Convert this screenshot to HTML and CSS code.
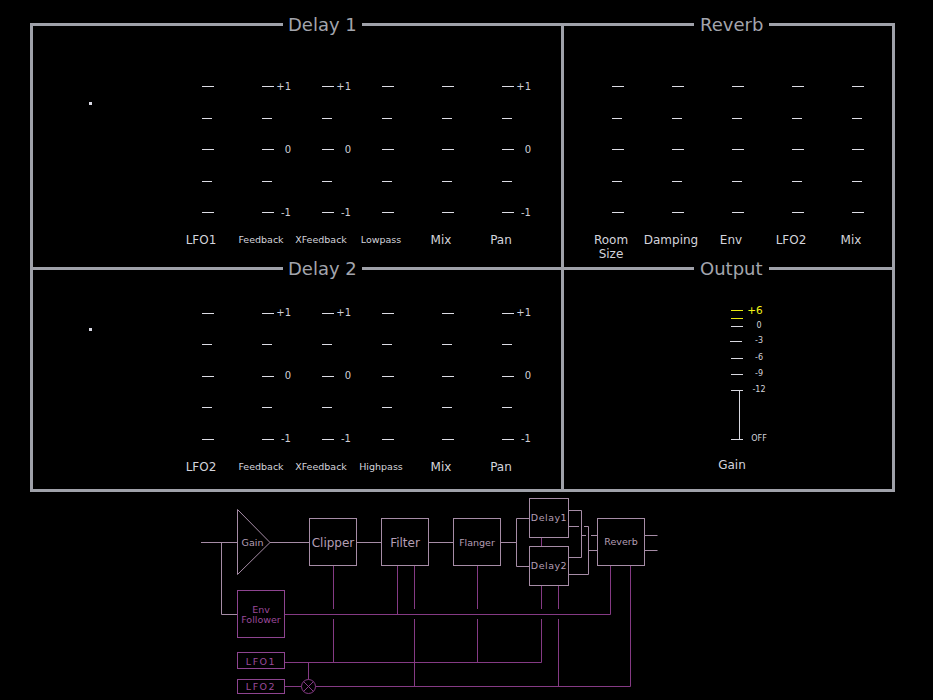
FILE: index.html
```html
<!DOCTYPE html>
<html lang="en">
<head>
    <meta charset="UTF-8">
    <title>Delay / Reverb</title>
    <link rel="stylesheet" href="styles.css">
</head>
<body>
    <div class="rack">
        <!-- Delay 1 -->
        <section class="panel delay top">
            <h2 class="title t-delay">Delay 1</h2>
            <div class="led-area"><span class="led"></span></div>
            <div class="sliders">
                <div class="slider">
                    <div class="scale">
                        <div class="mark"><i class="tick"></i></div>
                        <div class="mark"><i class="tick short"></i></div>
                        <div class="mark"><i class="tick"></i></div>
                        <div class="mark"><i class="tick short"></i></div>
                        <div class="mark"><i class="tick"></i></div>
                    </div>
                    <div class="label">LFO1</div>
                </div>
                <div class="slider">
                    <div class="scale">
                        <div class="mark"><i class="tick"></i><span class="val">+1</span></div>
                        <div class="mark"><i class="tick short"></i></div>
                        <div class="mark"><i class="tick"></i><span class="val">0</span></div>
                        <div class="mark"><i class="tick short"></i></div>
                        <div class="mark"><i class="tick"></i><span class="val">-1</span></div>
                    </div>
                    <div class="label small">Feedback</div>
                </div>
                <div class="slider">
                    <div class="scale">
                        <div class="mark"><i class="tick"></i><span class="val">+1</span></div>
                        <div class="mark"><i class="tick short"></i></div>
                        <div class="mark"><i class="tick"></i><span class="val">0</span></div>
                        <div class="mark"><i class="tick short"></i></div>
                        <div class="mark"><i class="tick"></i><span class="val">-1</span></div>
                    </div>
                    <div class="label small">XFeedback</div>
                </div>
                <div class="slider">
                    <div class="scale">
                        <div class="mark"><i class="tick"></i></div>
                        <div class="mark"><i class="tick short"></i></div>
                        <div class="mark"><i class="tick"></i></div>
                        <div class="mark"><i class="tick short"></i></div>
                        <div class="mark"><i class="tick"></i></div>
                    </div>
                    <div class="label small">Lowpass</div>
                </div>
                <div class="slider">
                    <div class="scale">
                        <div class="mark"><i class="tick"></i></div>
                        <div class="mark"><i class="tick short"></i></div>
                        <div class="mark"><i class="tick"></i></div>
                        <div class="mark"><i class="tick short"></i></div>
                        <div class="mark"><i class="tick"></i></div>
                    </div>
                    <div class="label">Mix</div>
                </div>
                <div class="slider">
                    <div class="scale">
                        <div class="mark"><i class="tick"></i><span class="val">+1</span></div>
                        <div class="mark"><i class="tick short"></i></div>
                        <div class="mark"><i class="tick"></i><span class="val">0</span></div>
                        <div class="mark"><i class="tick short"></i></div>
                        <div class="mark"><i class="tick"></i><span class="val">-1</span></div>
                    </div>
                    <div class="label">Pan</div>
                </div>
            </div>
        </section>

        <!-- Reverb -->
        <section class="panel reverb top">
            <h2 class="title t-right">Reverb</h2>
            <div class="sliders">
                <div class="slider">
                    <div class="scale">
                        <div class="mark"><i class="tick"></i></div>
                        <div class="mark"><i class="tick short"></i></div>
                        <div class="mark"><i class="tick"></i></div>
                        <div class="mark"><i class="tick short"></i></div>
                        <div class="mark"><i class="tick"></i></div>
                    </div>
                    <div class="label">Room<br>Size</div>
                </div>
                <div class="slider">
                    <div class="scale">
                        <div class="mark"><i class="tick"></i></div>
                        <div class="mark"><i class="tick short"></i></div>
                        <div class="mark"><i class="tick"></i></div>
                        <div class="mark"><i class="tick short"></i></div>
                        <div class="mark"><i class="tick"></i></div>
                    </div>
                    <div class="label">Damping</div>
                </div>
                <div class="slider">
                    <div class="scale">
                        <div class="mark"><i class="tick"></i></div>
                        <div class="mark"><i class="tick short"></i></div>
                        <div class="mark"><i class="tick"></i></div>
                        <div class="mark"><i class="tick short"></i></div>
                        <div class="mark"><i class="tick"></i></div>
                    </div>
                    <div class="label">Env</div>
                </div>
                <div class="slider">
                    <div class="scale">
                        <div class="mark"><i class="tick"></i></div>
                        <div class="mark"><i class="tick short"></i></div>
                        <div class="mark"><i class="tick"></i></div>
                        <div class="mark"><i class="tick short"></i></div>
                        <div class="mark"><i class="tick"></i></div>
                    </div>
                    <div class="label">LFO2</div>
                </div>
                <div class="slider">
                    <div class="scale">
                        <div class="mark"><i class="tick"></i></div>
                        <div class="mark"><i class="tick short"></i></div>
                        <div class="mark"><i class="tick"></i></div>
                        <div class="mark"><i class="tick short"></i></div>
                        <div class="mark"><i class="tick"></i></div>
                    </div>
                    <div class="label">Mix</div>
                </div>
            </div>
        </section>

        <!-- Delay 2 -->
        <section class="panel delay bottom">
            <h2 class="title t-delay">Delay 2</h2>
            <div class="led-area"><span class="led"></span></div>
            <div class="sliders">
                <div class="slider">
                    <div class="scale">
                        <div class="mark"><i class="tick"></i></div>
                        <div class="mark"><i class="tick short"></i></div>
                        <div class="mark"><i class="tick"></i></div>
                        <div class="mark"><i class="tick short"></i></div>
                        <div class="mark"><i class="tick"></i></div>
                    </div>
                    <div class="label">LFO2</div>
                </div>
                <div class="slider">
                    <div class="scale">
                        <div class="mark"><i class="tick"></i><span class="val">+1</span></div>
                        <div class="mark"><i class="tick short"></i></div>
                        <div class="mark"><i class="tick"></i><span class="val">0</span></div>
                        <div class="mark"><i class="tick short"></i></div>
                        <div class="mark"><i class="tick"></i><span class="val">-1</span></div>
                    </div>
                    <div class="label small">Feedback</div>
                </div>
                <div class="slider">
                    <div class="scale">
                        <div class="mark"><i class="tick"></i><span class="val">+1</span></div>
                        <div class="mark"><i class="tick short"></i></div>
                        <div class="mark"><i class="tick"></i><span class="val">0</span></div>
                        <div class="mark"><i class="tick short"></i></div>
                        <div class="mark"><i class="tick"></i><span class="val">-1</span></div>
                    </div>
                    <div class="label small">XFeedback</div>
                </div>
                <div class="slider">
                    <div class="scale">
                        <div class="mark"><i class="tick"></i></div>
                        <div class="mark"><i class="tick short"></i></div>
                        <div class="mark"><i class="tick"></i></div>
                        <div class="mark"><i class="tick short"></i></div>
                        <div class="mark"><i class="tick"></i></div>
                    </div>
                    <div class="label small">Highpass</div>
                </div>
                <div class="slider">
                    <div class="scale">
                        <div class="mark"><i class="tick"></i></div>
                        <div class="mark"><i class="tick short"></i></div>
                        <div class="mark"><i class="tick"></i></div>
                        <div class="mark"><i class="tick short"></i></div>
                        <div class="mark"><i class="tick"></i></div>
                    </div>
                    <div class="label">Mix</div>
                </div>
                <div class="slider">
                    <div class="scale">
                        <div class="mark"><i class="tick"></i><span class="val">+1</span></div>
                        <div class="mark"><i class="tick short"></i></div>
                        <div class="mark"><i class="tick"></i><span class="val">0</span></div>
                        <div class="mark"><i class="tick short"></i></div>
                        <div class="mark"><i class="tick"></i><span class="val">-1</span></div>
                    </div>
                    <div class="label">Pan</div>
                </div>
            </div>
        </section>

        <!-- Output -->
        <section class="panel output">
            <h2 class="title t-right">Output</h2>
            <div class="meter">
                <i class="mtick hot" style="top: 40px"></i>
                <i class="mtick hot" style="top: 48px"></i>
                <i class="mtick" style="top: 56px"></i>
                <i class="mtick" style="top: 71px; left: 29px"></i>
                <i class="mtick" style="top: 88px"></i>
                <i class="mtick" style="top: 104px"></i>
                <i class="mtick" style="top: 120px"></i>
                <i class="mtick" style="top: 169px"></i>
                <i class="fader"></i>
                <span class="mval hot" style="top: 34px">+6</span>
                <span class="mval" style="top: 51px">0</span>
                <span class="mval" style="top: 66px">-3</span>
                <span class="mval" style="top: 83px">-6</span>
                <span class="mval" style="top: 99px">-9</span>
                <span class="mval" style="top: 115px">-12</span>
                <span class="mval" style="top: 164px">OFF</span>
            </div>
            <div class="gain-label">Gain</div>
        </section>
    </div>

    <svg class="chain" width="933" height="208" viewBox="0 492 933 208">
        <!-- modulation routing -->
        <g class="mod-lines">
            <path d="M284.5 614.5H610.5V565.5"/>
            <path d="M284.5 662.5H541.5"/>
            <path d="M284.5 686.5H301.5 M315.5 686.5H630.5V565.5"/>
            <path d="M308.5 662.5V679.5"/>
            <path d="M333.5 565.5V609 M333.5 619V662.5"/>
            <path d="M397.5 565.5V614.5"/>
            <path d="M414.5 565.5V609 M414.5 619V686.5"/>
            <path d="M477.5 565.5V609 M477.5 619V662.5"/>
            <path d="M541.5 537.5V609 M541.5 619V662.5"/>
            <path d="M558.5 585.5V609 M558.5 619V686.5"/>
            <circle cx="308.5" cy="686.5" r="7"/>
            <path d="M303.5 681.5L313.5 691.5 M313.5 681.5L303.5 691.5"/>
        </g>

        <!-- audio path -->
        <g class="audio-lines">
            <path d="M201 542.5H238 M221.5 542.5V614.5H237.5"/>
            <path d="M270 542.5H309.5 M356.5 542.5H381.5 M428.5 542.5H453.5 M500.5 542.5H516.5"/>
            <path d="M516.5 518.5V566.5 M516.5 518.5H529.5 M516.5 566.5H529.5"/>
            <path d="M568.5 510.5H581.5V557.5H568.5"/>
            <path d="M568.5 526.5H579 M584 526.5H588.5V574.5H568.5"/>
            <path d="M581.5 535.5H586 M591 535.5H597.5 M588.5 550.5H597.5"/>
            <path d="M644.5 535.5H657.5 M644.5 550.5H657.5"/>
        </g>

        <g class="audio-box">
            <polygon points="237.5,509.5 237.5,574.5 270,542.5"/>
            <rect x="309.5" y="518.5" width="47" height="47"/>
            <rect x="381.5" y="518.5" width="47" height="47"/>
            <rect x="453.5" y="518.5" width="47" height="47"/>
            <rect x="529.5" y="498.5" width="39" height="39"/>
            <rect x="529.5" y="546.5" width="39" height="39"/>
            <rect x="597.5" y="518.5" width="47" height="47"/>
        </g>
        <g class="mod-box">
            <rect x="237.5" y="590.5" width="47" height="47"/>
            <rect x="237.5" y="652.5" width="47" height="16"/>
            <rect x="237.5" y="679.5" width="47" height="14"/>
        </g>

        <g class="audio-text">
            <text x="252.5" y="545.5" class="s9">Gain</text>
            <text x="333" y="546.5" class="s12">Clipper</text>
            <text x="405" y="546.5" class="s12">Filter</text>
            <text x="477" y="545.5" class="s9">Flanger</text>
            <text x="549" y="521" class="s9 wide">Delay1</text>
            <text x="549" y="568.5" class="s9 wide">Delay2</text>
            <text x="621" y="545" class="s9">Reverb</text>
        </g>
        <g class="mod-text">
            <text x="261" y="612.5" class="s9">Env</text>
            <text x="261" y="623" class="s9">Follower</text>
            <text x="261" y="665" class="s9 spaced">LFO1</text>
            <text x="261" y="689.5" class="s9 spaced">LFO2</text>
        </g>
    </svg>
</body>
</html>
```
FILE: styles.css
```css
body {
    margin: 0;
    background-color: #000000;
    font-family: "DejaVu Sans", sans-serif;
    color: #d4d4dc;
}

.rack {
    display: grid;
    grid-template-columns: 528px 328px;
    grid-template-rows: 241px 219px;
    gap: 3px;
    width: 859px;
    margin: 23px 0 0 30px;
    border: 3px solid #9fa1a9;
    background-color: #9fa1a9; /* shows through the gaps as dividers */
}

.panel {
    position: relative;
    display: flex;
    background-color: #000000;
}

.panel.top {
    padding-top: 45px;
}

.panel.bottom {
    padding-top: 27.5px;
}

.title {
    position: absolute;
    top: -11px;
    margin: 0;
    padding: 0 5px;
    background-color: #000000;
    color: #a3a5ad;
    font-size: 18px;
    font-weight: normal;
    line-height: 20px;
    z-index: 1;
}

.t-delay {
    left: 250px;
}

.t-right {
    left: 130px;
    padding: 0 6px;
}

/* little indicator left of the delay sliders */
.led-area {
    width: 138px;
}

.led {
    display: block;
    width: 3px;
    height: 3px;
    margin: 30.5px 0 0 56px;
    background-color: #d8d8e4;
}

.sliders {
    display: flex;
}

.reverb .sliders {
    margin-left: 17px;
}

.slider {
    width: 60px;
}

.mark {
    display: flex;
    align-items: center;
    height: 31.5px;
    padding-left: 31px;
}

.tick {
    display: block;
    width: 12px;
    height: 1px;
    background-color: #dcdce4;
}

.tick.short {
    width: 10px;
}

.val {
    width: 18px;
    text-align: right;
    font-size: 10px;
    line-height: 10px;
    color: #cfcfd7;
}

.label {
    margin-top: 4.5px;
    text-align: center;
    font-size: 12px;
    line-height: 14px;
    color: #d4d4dc;
}

.label.small {
    font-size: 9.5px;
}

/* output meter */
.output {
    flex-direction: column;
}

.meter {
    position: relative;
    width: 62px;
    height: 188px;
    margin-left: 137px;
}

.mtick {
    position: absolute;
    left: 30px;
    width: 12px;
    height: 1px;
    background-color: #d8d8e0;
}

.mtick.hot {
    background-color: #e8e810;
}

.fader {
    position: absolute;
    left: 38px;
    top: 120px;
    width: 1px;
    height: 50px;
    background-color: #d8d8e0;
}

.mval {
    position: absolute;
    left: 48px;
    width: 20px;
    text-align: center;
    font-size: 8px;
    line-height: 10px;
    color: #d4d4dc;
}

.mval.hot {
    left: 44px;
    font-size: 10.5px;
    line-height: 12px;
    color: #f4f418;
}

.gain-label {
    width: 62px;
    margin-left: 137px;
    text-align: center;
    font-size: 12px;
    line-height: 14px;
}

/* signal chain diagram */
.chain {
    display: block;
}

.chain path,
.chain circle {
    fill: none;
    stroke-width: 1;
}

.mod-lines path,
.mod-lines circle {
    stroke: #853a84;
}

.audio-lines path {
    stroke: #a68ca6;
}

.audio-box polygon,
.audio-box rect {
    fill: #000000;
    stroke: #a68ca6;
}

.mod-box rect {
    fill: #000000;
    stroke: #8e4490;
}

.chain text {
    font-family: "DejaVu Sans", sans-serif;
    text-anchor: middle;
}

.audio-text text {
    fill: #b49eb4;
}

.mod-text text {
    fill: #9a4a9a;
}

.s9 {
    font-size: 9.5px;
}

.s12 {
    font-size: 12px;
}

.wide {
    letter-spacing: 0.5px;
}

.spaced {
    letter-spacing: 1.5px;
}
```
